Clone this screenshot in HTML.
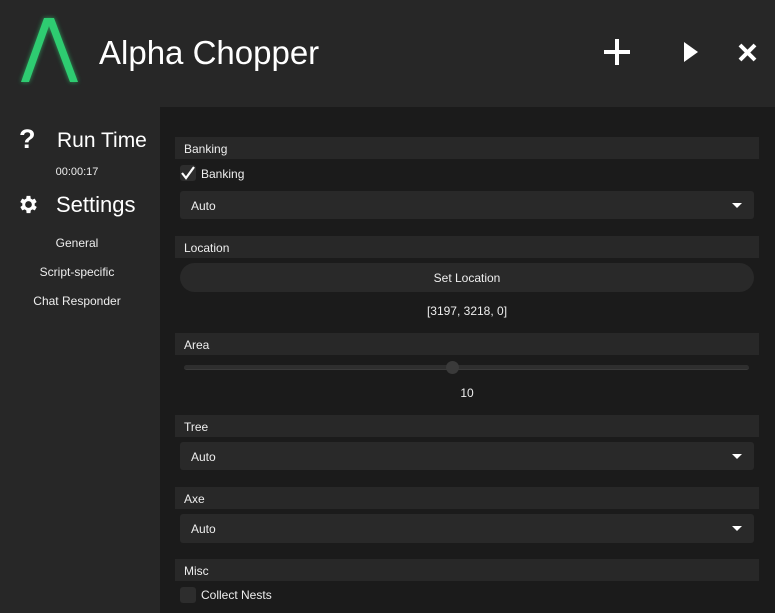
<!DOCTYPE html>
<html><head><style>
*{margin:0;padding:0;box-sizing:border-box}
body{width:775px;height:613px;background:#272727;font-family:"Liberation Sans","DejaVu Sans",sans-serif;color:#fff;position:relative;overflow:hidden}
.a{position:absolute}
.content{left:160px;top:107px;width:615px;height:506px;background:#1b1b1b}
.hdr{left:175px;width:584px;height:22px;background:#282828;font-size:12px;padding:5px 0 0 9px;color:#eee}
.dd{left:180px;width:574px;height:28px;background:#292929;border-radius:3px;font-size:12px;padding:8px 0 0 11px;color:#eee}
.dd:after{content:"";position:absolute;right:12px;top:12px;border-left:5px solid transparent;border-right:5px solid transparent;border-top:5px solid #fff}
.cb{left:180px;width:16px;height:16px;background:#2d2d2d;border-radius:3px}
.lbl{font-size:12px;color:#eee}
.side{font-size:12px;color:#eee;width:154px;text-align:center;left:0}
</style></head><body>
<svg class="a" style="left:12px;top:10px" width="76" height="80" viewBox="0 0 76 80">
<defs><filter id="g" x="-30%" y="-30%" width="160%" height="160%"><feGaussianBlur stdDeviation="2.5"/></filter></defs>
<path d="M9 72 L32 8 L42 8 L66 72 L58 72 L37 16 L17 72 Z" fill="#2ecc71" filter="url(#g)" opacity="0.7"/>
<path d="M9 72 L32 8 L42 8 L66 72 L58 72 L37 16 L17 72 Z" fill="#2ecc71"/>
</svg>
<div class="a" style="left:99px;top:34px;font-size:33px;color:#fff">Alpha Chopper</div>
<svg class="a" style="left:604px;top:39px" width="27" height="27"><rect x="0" y="11" width="26" height="4" fill="#fff"/><rect x="11" y="0" width="4" height="26" fill="#fff"/></svg>
<svg class="a" style="left:684px;top:42px" width="14" height="20"><path d="M0 0 L14 10 L0 20Z" fill="#fff"/></svg>
<svg class="a" style="left:738px;top:43px" width="19" height="19"><path d="M2 2 L17 17 M17 2 L2 17" stroke="#fff" stroke-width="4"/></svg>
<div class="a" style="left:19px;top:124px;font-size:27px;font-weight:bold">?</div>
<div class="a" style="left:57px;top:129px;font-size:21px">Run Time</div>
<div class="a side" style="top:166px;font-size:11px">00:00:17</div>
<svg class="a" style="left:17px;top:193px" width="23" height="23" viewBox="0 0 24 24"><path fill="#fff" d="M19.4 13a7.5 7.5 0 0 0 0-2l2.1-1.6-2-3.5-2.5 1a7 7 0 0 0-1.7-1L15 3h-4l-.4 2.9a7 7 0 0 0-1.7 1l-2.5-1-2 3.5L6.6 11a7.5 7.5 0 0 0 0 2l-2.1 1.6 2 3.5 2.5-1a7 7 0 0 0 1.7 1L11 21h4l.4-2.9a7 7 0 0 0 1.7-1l2.5 1 2-3.5zM13 15.5a3.5 3.5 0 1 1 0-7 3.5 3.5 0 0 1 0 7z" transform="translate(-1 0)"/></svg>
<div class="a" style="left:56px;top:192px;font-size:22px">Settings</div>
<div class="a side" style="top:236px">General</div>
<div class="a side" style="top:265px">Script-specific</div>
<div class="a side" style="top:294px">Chat Responder</div>
<div class="a content"></div>
<div class="a hdr" style="top:137px">Banking</div>
<div class="a cb" style="top:165px"></div>
<svg class="a" style="left:181px;top:166px" width="14" height="14"><path d="M1 7 L5 12 L13 1" stroke="#fff" stroke-width="2.2" fill="none"/></svg>
<div class="a lbl" style="left:201px;top:167px">Banking</div>
<div class="a dd" style="top:191px">Auto</div>
<div class="a hdr" style="top:236px">Location</div>
<div class="a" style="left:180px;top:263px;width:574px;height:29px;border-radius:15px;background:#292929;font-size:12px;text-align:center;padding-top:8px;color:#eee">Set Location</div>
<div class="a lbl" style="left:0;width:934px;text-align:center;top:304px">[3197, 3218, 0]</div>
<div class="a hdr" style="top:333px">Area</div>
<div class="a" style="left:184px;top:365px;width:565px;height:5px;border-radius:3px;background:#2e2e2e;border-bottom:1px solid #3a3a3a"></div>
<div class="a" style="left:446px;top:361px;width:13px;height:13px;border-radius:50%;background:#3a3a3a"></div>
<div class="a lbl" style="left:0;width:934px;text-align:center;top:386px">10</div>
<div class="a hdr" style="top:415px">Tree</div>
<div class="a dd" style="top:442px">Auto</div>
<div class="a hdr" style="top:487px">Axe</div>
<div class="a dd" style="top:514px;height:29px">Auto</div>
<div class="a hdr" style="top:559px">Misc</div>
<div class="a cb" style="top:587px"></div>
<div class="a lbl" style="left:201px;top:588px">Collect Nests</div>
</body></html>
